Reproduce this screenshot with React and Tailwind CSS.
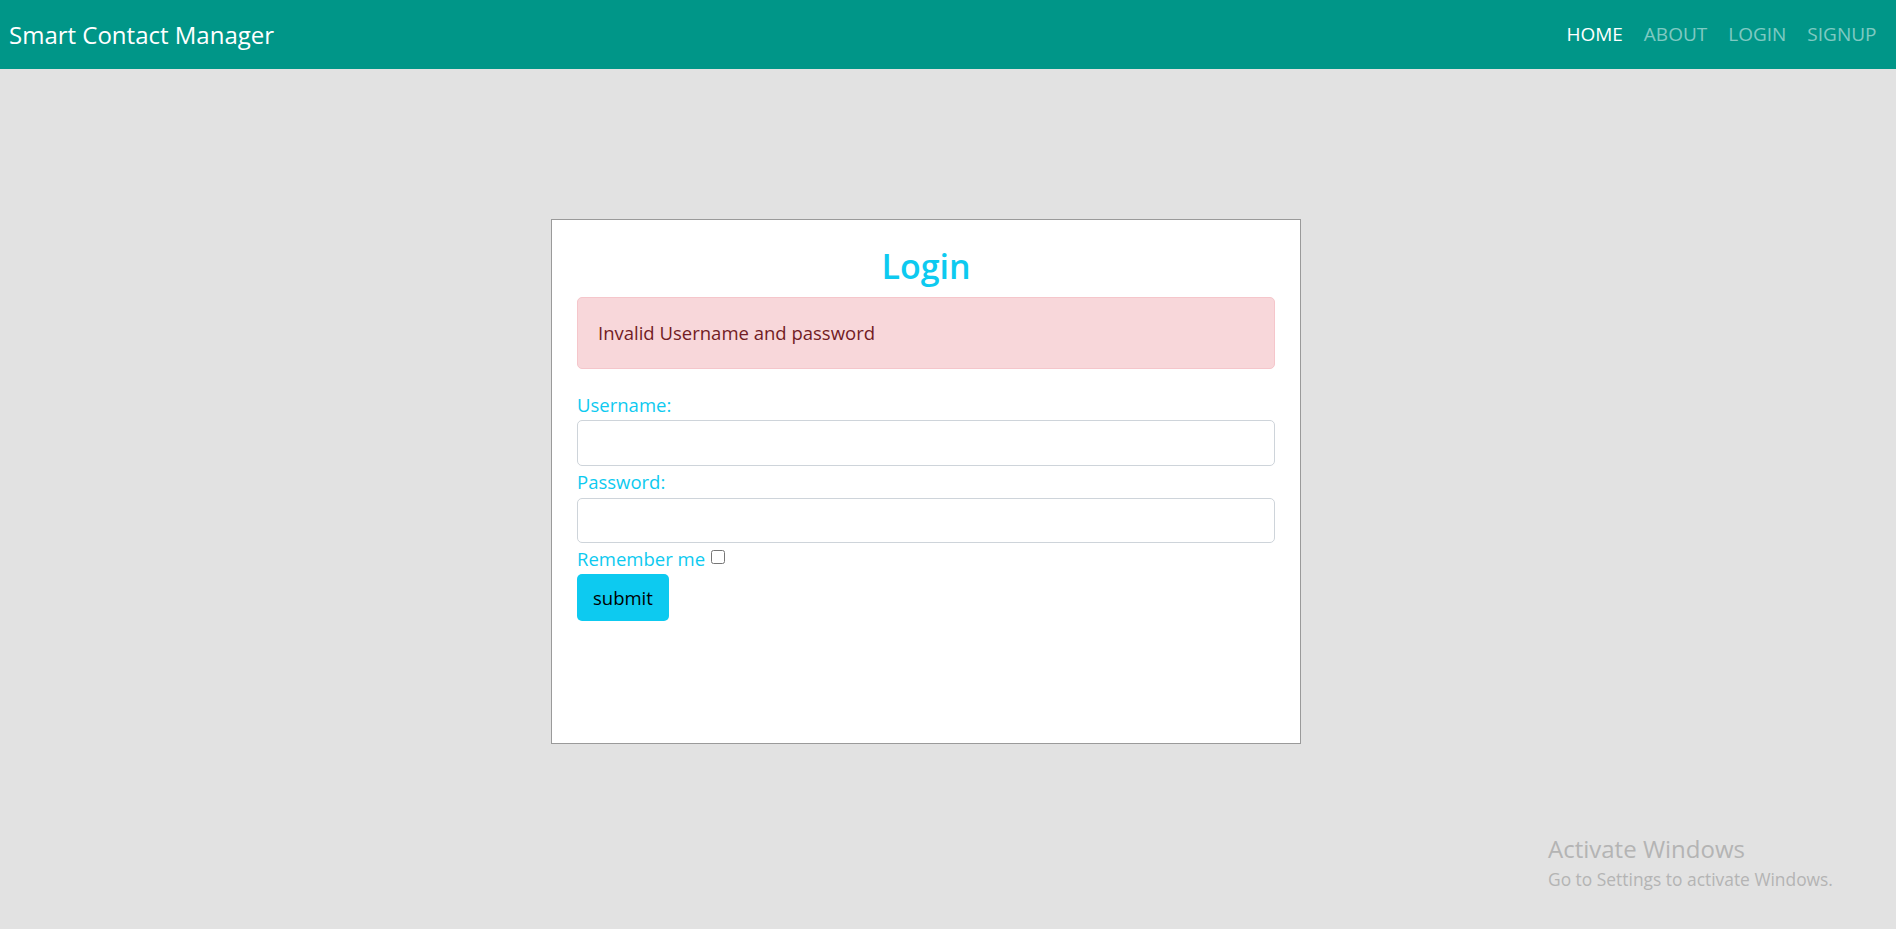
import React from "react";

const NAV = [
  { label: "HOME", active: true },
  { label: "ABOUT" },
  { label: "LOGIN" },
  { label: "SIGNUP" },
];

export default function App() {
  return (
    <div
      className="relative min-h-[929px] bg-[#e2e2e2]"
      style={{ fontFamily: '"Open Sans", "Noto Sans", sans-serif' }}
    >
      {/* Navbar */}
      <nav className="h-[69px] bg-[#009688] flex items-center justify-between pl-[9px] pr-[9px]">
        <a className="text-white text-[24px] leading-none">Smart Contact Manager</a>
        <ul className="flex items-center">
          {NAV.map(({ label, active }) => (
            <li
              key={label}
              className={`px-[10.5px] text-[19px] ${active ? "text-white" : "text-white/50"}`}
            >
              {label}
            </li>
          ))}
        </ul>
      </nav>

      {/* Login card */}
      <div className="pl-[551px] pt-[150px]">
        <div className="w-[750px] h-[525px] bg-white border border-[#9a9a9a] px-[25px] pt-[24px]">
          <h2 className="text-center text-[34px] leading-[44px] font-semibold text-[#0dcaf0]">Login</h2>
          <div className="mt-[9px] h-[72px] flex items-center px-[20px] bg-[#f8d7da] border border-[#f5c6cb] rounded-[5px] text-[#721c24] text-[18.5px]">
            Invalid Username and password
          </div>

          <form className="mt-[20px] flex flex-col">
            <label className="text-[18.5px] leading-[31px] text-[#0dcaf0]">Username:</label>
            <input
              type="text"
              className="h-[46px] w-full border border-[#ced4da] rounded-[5px] bg-white"
            />
            <label className="text-[18.5px] leading-[32px] text-[#0dcaf0]">Password:</label>
            <input
              type="password"
              className="h-[45px] w-full border border-[#ced4da] rounded-[5px] bg-white"
            />
            <div className="flex items-center h-[31px] text-[18.5px] text-[#0dcaf0]">
              <span>Remember me</span>
              <input type="checkbox" className="ml-[6px] w-[14px] h-[14px] -mt-[4px]" />
            </div>
            <div>
              <button
                type="button"
                className="h-[47px] px-[16px] bg-[#0dcaf0] rounded-[5px] text-black text-[18.5px]"
              >
                submit
              </button>
            </div>
          </form>
        </div>
      </div>

      {/* Windows watermark */}
      <div className="absolute left-[1548px] top-[834px] text-[#b4b4b4] pointer-events-none">
        <div className="text-[24px] leading-[30px]">Activate Windows</div>
        <div className="text-[17.4px] leading-[24px] mt-[3px]">Go to Settings to activate Windows.</div>
      </div>
    </div>
  );
}
